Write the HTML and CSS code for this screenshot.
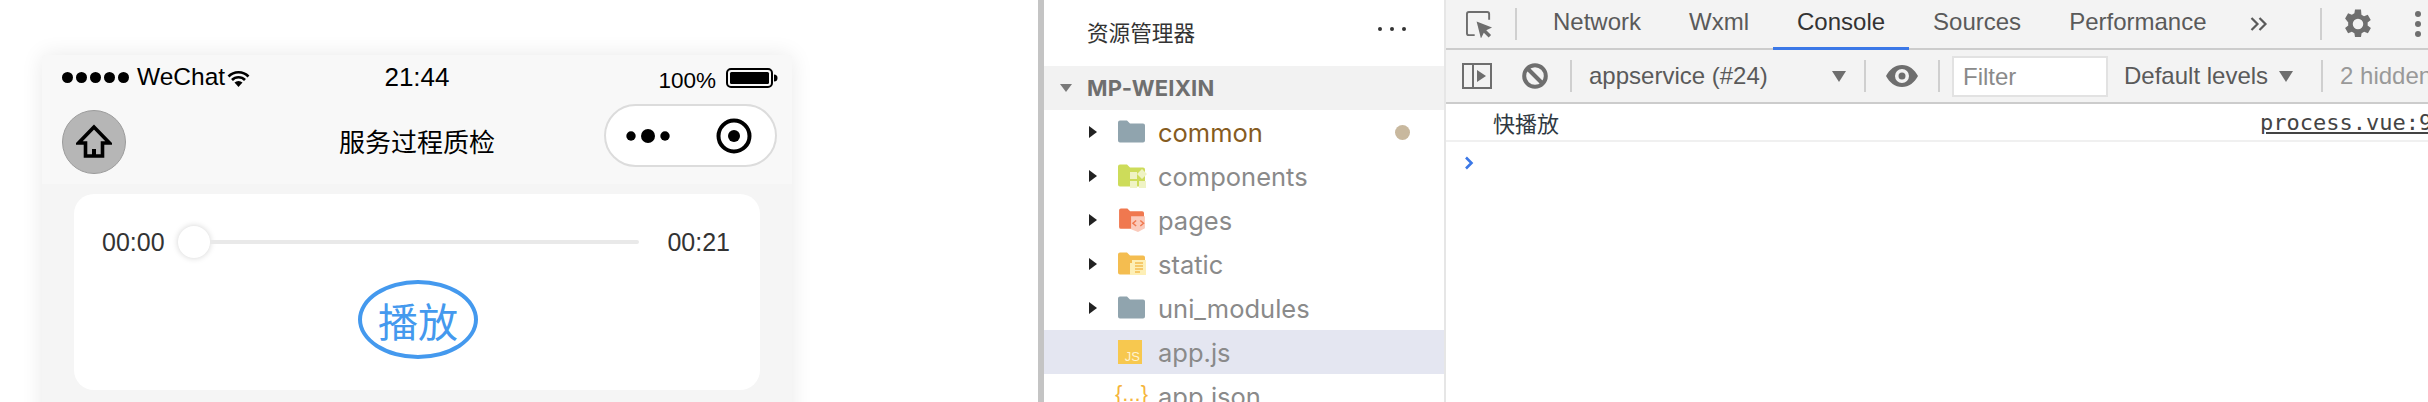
FILE: index.html
```html
<!DOCTYPE html>
<html lang="zh-CN">
<head>
  <meta charset="UTF-8">
  <title>服务过程质检</title>
  <link rel="stylesheet" href="styles.css">
</head>
<body>
  <section class="simulator">
    <div class="phone">
      <header class="phone-head">
        <div class="status">
          <div class="status-left">
            <span class="signal"><i></i><i></i><i></i><i></i><i></i></span>
            <span class="carrier">WeChat</span>
            <svg class="wifi" viewBox="0 0 23 17"><path d="M1.500 6.500a14 14 0 0 1 20 0" fill="none" stroke="#000" stroke-width="2.600"/><path d="M5 10a9 9 0 0 1 13 0" fill="none" stroke="#000" stroke-width="2.600"/><path d="M7.500 12.600a5.600 5.600 0 0 1 8 0L11.500 17z" fill="#000"/></svg>
          </div>
          <div class="clock">21:44</div>
          <div class="status-right">
            <span class="percent">100%</span>
            <svg class="battery" viewBox="0 0 52 20"><rect x="1" y="1" width="45" height="18" rx="4" fill="none" stroke="#000" stroke-width="2"/><rect x="4" y="4" width="39" height="12" rx="1.500" fill="#000"/><path d="M48 6.500a3.500 3.500 0 0 1 0 7z" fill="#000"/></svg>
          </div>
        </div>
        <nav class="nav">
          <div class="nav-left">
            <button class="home">
              <svg viewBox="0 0 36 36"><path d="M18 3 2.500 19H9.500V32h17V19h7z" fill="none" stroke="#000" stroke-width="3.600" stroke-linejoin="miter"/><rect x="16" y="25" width="4" height="7" fill="#000"/></svg>
            </button>
          </div>
          <div class="nav-title">服务过程质检</div>
          <div class="nav-right">
            <div class="capsule">
              <svg class="capsule-more" viewBox="0 0 46 16"><circle cx="5" cy="8" r="4.700"/><circle cx="22" cy="8" r="7"/><circle cx="39" cy="8" r="4.700"/></svg>
              <svg class="capsule-close" viewBox="0 0 36 36"><circle cx="18" cy="18" r="15.500" fill="none" stroke="#000" stroke-width="4"/><circle cx="18" cy="18" r="6"/></svg>
            </div>
          </div>
        </nav>
      </header>
      <main class="phone-body">
        <div class="card">
          <div class="player">
            <span class="time">00:00</span>
            <div class="slider">
              <span class="knob"></span>
              <span class="track"></span>
            </div>
            <span class="time">00:21</span>
          </div>
          <div class="play">播放</div>
        </div>
      </main>
    </div>
  </section>

  <div class="splitter"></div>

  <aside class="explorer">
    <div class="explorer-head">
      <span>资源管理器</span>
      <span class="more"><i></i><i></i><i></i></span>
    </div>
    <div class="project"><span class="caret-down"></span>MP-WEIXIN</div>
    <ul class="tree">
      <li class="row">
        <span class="arrow"></span>
        <svg class="file-icon" viewBox="0 0 30 24"><path d="M1 2.500a2 2 0 0 1 2-2h7l3 3h13a2 2 0 0 1 2 2v15a2 2 0 0 1-2 2H3a2 2 0 0 1-2-2z" fill="#90a4ae"/></svg>
        <span class="label modified">common</span>
        <span class="dot"></span>
      </li>
      <li class="row">
        <span class="arrow"></span>
        <svg class="file-icon" viewBox="0 0 30 24"><path d="M1 2.500a2 2 0 0 1 2-2h7l3 3h13a2 2 0 0 1 2 2v15a2 2 0 0 1-2 2H3a2 2 0 0 1-2-2z" fill="#cddc5a"/><path d="M13 8h7v7h-7zM13 17h7v7h-7zM22 17h7v7h-7zM25 5l5 5-5 5-5-5z" fill="#eff3c4"/></svg>
        <span class="label">components</span>
      </li>
      <li class="row">
        <span class="arrow"></span>
        <svg class="file-icon" viewBox="0 0 30 26"><path d="M1 2.500a2 2 0 0 1 2-2h7l3 3h13a2 2 0 0 1 2 2v15a2 2 0 0 1-2 2H3a2 2 0 0 1-2-2z" fill="#f0784f"/><path d="M14 9h15v13l-7.500 4-7.500-3z" fill="#fbcabb"/><path d="M19.500 13.500 16 16.500l3.500 3M24 13.500l3.500 3-3.500 3" fill="none" stroke="#f0784f" stroke-width="1.600"/></svg>
        <span class="label">pages</span>
      </li>
      <li class="row">
        <span class="arrow"></span>
        <svg class="file-icon" viewBox="0 0 30 24"><path d="M1 2.500a2 2 0 0 1 2-2h7l3 3h13a2 2 0 0 1 2 2v15a2 2 0 0 1-2 2H3a2 2 0 0 1-2-2z" fill="#f4bd50"/><path d="M15 8h14v15H13V11h2z" fill="#fdefb6"/><path d="M18 11h8M18 14h8M18 17h8M18 20h5" stroke="#f4bd50" stroke-width="1.500"/></svg>
        <span class="label">static</span>
      </li>
      <li class="row">
        <span class="arrow"></span>
        <svg class="file-icon" viewBox="0 0 30 24"><path d="M1 2.500a2 2 0 0 1 2-2h7l3 3h13a2 2 0 0 1 2 2v15a2 2 0 0 1-2 2H3a2 2 0 0 1-2-2z" fill="#90a4ae"/></svg>
        <span class="label">uni_modules</span>
      </li>
      <li class="row selected">
        <span class="arrow-none"></span>
        <span class="js-icon">JS</span>
        <span class="label">app.js</span>
      </li>
      <li class="row">
        <span class="arrow-none"></span>
        <span class="json-icon">{...}</span>
        <span class="label">app.json</span>
      </li>
    </ul>
  </aside>

  <section class="devtools">
    <div class="tabbar">
      <svg class="inspect" viewBox="0 0 28 28"><path d="M9 25H3a2 2 0 0 1-2-2V3a2 2 0 0 1 2-2h19a2 2 0 0 1 2 2v6" fill="none" stroke="#6e6e6e" stroke-width="2"/><path d="M11 11l16 6-6 3 5 5-2.500 2.500-5-5-3 6z" fill="#6e6e6e"/></svg>
      <span class="sep sep-tab"></span>
      <div class="tabs">
        <span class="tab">Network</span>
        <span class="tab">Wxml</span>
        <span class="tab active">Console</span>
        <span class="tab">Sources</span>
        <span class="tab">Performance</span>
      </div>
      <svg class="overflow-tabs" viewBox="0 0 18 14"><path d="M1.500 1 7.500 7l-6 6M9.500 1l6 6-6 6" fill="none" stroke="#5a5a5a" stroke-width="2.200"/></svg>
      <span class="sep sep-gear"></span>
      <svg class="gear" viewBox="0 0 24 24"><path fill="#6e6e6e" d="M19.400 13a7.600 7.600 0 0 0 0-2l2.100-1.600-2-3.500-2.500 1a7.600 7.600 0 0 0-1.700-1L15 2.300h-4l-.4 2.600a7.600 7.600 0 0 0-1.700 1l-2.500-1-2 3.500L6.500 11a7.600 7.600 0 0 0 0 2l-2.100 1.600 2 3.500 2.500-1a7.600 7.600 0 0 0 1.700 1l.4 2.600h4l.4-2.600a7.600 7.600 0 0 0 1.700-1l2.500 1 2-3.500zM13 15.500a3.500 3.500 0 1 1 0-7 3.500 3.500 0 0 1 0 7z" transform="translate(-1 0)"/></svg>
      <span class="kebab"><i></i><i></i><i></i></span>
    </div>
    <div class="filterbar">
      <svg class="drawer" viewBox="0 0 30 26"><path d="M1 1h28v24H1zM11 1v24" fill="none" stroke="#6e6e6e" stroke-width="2"/><path d="M15 7l9 6-9 6z" fill="#6e6e6e"/></svg>
      <svg class="block" viewBox="0 0 26 26"><circle cx="13" cy="13" r="10.800" fill="none" stroke="#6e6e6e" stroke-width="4"/><path d="M5.500 5.500l15 15" stroke="#6e6e6e" stroke-width="4"/></svg>
      <span class="sep sep-block"></span>
      <span class="context">appservice (#24)</span>
      <span class="caret"></span>
      <span class="sep sep-context"></span>
      <svg class="eye" viewBox="0 0 32 22"><path fill="#6e6e6e" fill-rule="evenodd" d="M16 0C9 0 3.500 4.500 0 11c3.500 6.500 9 11 16 11s12.500-4.500 16-11C28.500 4.500 23 0 16 0zm0 18a7 7 0 1 1 0-14 7 7 0 0 1 0 14zm0-3.500a3.500 3.500 0 1 0 0-7 3.500 3.500 0 0 0 0 7z"/></svg>
      <span class="sep sep-eye"></span>
      <div class="filter">Filter</div>
      <span class="levels">Default levels</span>
      <span class="caret caret-levels"></span>
      <span class="sep sep-levels"></span>
      <span class="hidden-count">2 hidden</span>
    </div>
    <div class="console">
      <div class="message">
        <span>快播放</span>
        <a class="source">process.vue:9</a>
      </div>
      <div class="prompt">
        <svg viewBox="0 0 10 14"><path d="M2 1.500 7.500 7 2 12.500" fill="none" stroke="#3b78e7" stroke-width="2.600"/></svg>
      </div>
    </div>
  </section>
</body>
</html>
```

FILE: styles.css
```css
* {
  box-sizing: border-box;
}
html, body {
  height: 402px;
}
body {
  margin: 0;
  display: flex;
  overflow: hidden;
  background: #fff;
  font-family: "Liberation Sans", "Noto Sans CJK SC", sans-serif;
  color: #000;
}
i {
  display: block;
}

/* simulator */
.simulator {
  width: 1038px;
  height: 402px;
  flex: none;
  padding: 55px 0 0 42px;
  overflow: hidden;
}
.phone {
  width: 750px;
  height: 420px;
  border-radius: 4px 4px 0 0;
  background: #f5f5f5;
  box-shadow: 0 0 22px rgba(0, 0, 0, 0.09);
}
.phone-head {
  height: 129px;
  background: #f8f8f8;
  border-radius: 4px 4px 0 0;
}
.status {
  height: 44px;
  padding: 0 20px;
  display: grid;
  grid-template-columns: 1fr auto 1fr;
  align-items: center;
}
.status-left {
  display: flex;
  align-items: center;
}
.signal {
  display: flex;
  gap: 3px;
  margin-right: 8px;
}
.signal i {
  width: 11px;
  height: 11px;
  border-radius: 50%;
  background: #000;
}
.carrier {
  font-size: 24.500px;
}
.wifi {
  width: 23px;
  height: 17px;
  margin-left: 2px;
  margin-top: 2px;
}
.clock {
  font-size: 26px;
}
.status-right {
  display: flex;
  justify-content: flex-end;
  align-items: center;
  gap: 10px;
  margin-right: -6px;
  padding-top: 7px;
}
.percent {
  font-size: 22.500px;
}
.battery {
  width: 52px;
  height: 20px;
  margin-top: -6px;
}
.nav {
  height: 85px;
  padding: 0 20px;
  display: grid;
  grid-template-columns: 1fr auto 1fr;
  align-items: center;
}
.home {
  width: 64px;
  height: 64px;
  padding: 0;
  display: flex;
  align-items: center;
  justify-content: center;
  border: 1px solid #9c9c9c;
  border-radius: 50%;
  background: #b6b6b6;
}
.home svg {
  width: 36px;
  height: 36px;
}
.nav-title {
  padding-bottom: 2px;
  font-size: 26px;
}
.nav-right {
  display: flex;
  justify-content: flex-end;
  margin-right: -5px;
}
.capsule {
  width: 173px;
  height: 63px;
  margin-bottom: 12px;
  padding: 0 23px 0 20px;
  display: flex;
  align-items: center;
  justify-content: space-between;
  border: 2px solid #dcdcdc;
  border-radius: 32px;
  background: #fff;
}
.capsule-more {
  width: 46px;
  height: 16px;
}
.capsule-close {
  width: 36px;
  height: 36px;
}
.phone-body {
  padding: 10px 32px 0;
}
.card {
  height: 196px;
  padding: 32px 30px 0 28px;
  border-radius: 20px;
  background: #fff;
}
.player {
  display: flex;
  align-items: center;
  height: 32px;
}
.time {
  font-size: 25px;
  color: #333;
}
.slider {
  flex: 1;
  margin: 0 28px 0 13px;
  display: flex;
  align-items: center;
}
.knob {
  width: 32px;
  height: 32px;
  flex: none;
  border-radius: 50%;
  background: #fff;
  box-shadow: 0 0 6px rgba(0, 0, 0, 0.18);
}
.track {
  flex: 1;
  height: 4px;
  border-radius: 0 2px 2px 0;
  background: #e9e9e9;
}
.play {
  width: 120px;
  height: 79px;
  margin: 22px 0 0 256px;
  display: flex;
  align-items: center;
  justify-content: center;
  border: 4px solid #4499ee;
  border-radius: 50%;
  font-size: 40px;
  color: #4499ee;
}

.splitter {
  width: 6px;
  height: 402px;
  flex: none;
  background: #c4c4c4;
}

/* file tree */
.explorer {
  width: 400px;
  flex: none;
  overflow: hidden;
  background: #fff;
}
.explorer-head {
  height: 66px;
  padding: 0 38px 4px 43px;
  display: flex;
  align-items: center;
  justify-content: space-between;
  font-size: 21.600px;
  color: #333;
}
.more {
  display: flex;
  gap: 8px;
  margin-bottom: 4px;
}
.more i {
  width: 4px;
  height: 4px;
  border-radius: 50%;
  background: #333;
}
.project {
  height: 44px;
  padding-left: 16px;
  display: flex;
  align-items: center;
  background: #f2f2f2;
  font-family: Inter, "Liberation Sans", sans-serif;
  font-size: 22px;
  font-weight: 700;
  letter-spacing: 0.2px;
  color: #6f6f6f;
}
.caret-down {
  width: 0;
  height: 0;
  margin-right: 15px;
  border-left: 6px solid transparent;
  border-right: 6px solid transparent;
  border-top: 8px solid #7a7a7a;
}
.tree {
  margin: 0;
  padding: 0;
  list-style: none;
}
.row {
  height: 44px;
  padding-left: 45px;
  padding-right: 34px;
  display: flex;
  align-items: center;
}
.row.selected {
  background: #e4e6f1;
}
.arrow {
  width: 0;
  height: 0;
  flex: none;
  margin-right: 20px;
  border-top: 6px solid transparent;
  border-bottom: 6px solid transparent;
  border-left: 8px solid #222;
}
.arrow-none {
  width: 28px;
  flex: none;
}
.file-icon {
  width: 30px;
  height: 24px;
  flex: none;
  margin-right: 11px;
}
.js-icon {
  width: 24px;
  height: 24px;
  flex: none;
  margin: 0 16px 0 1px;
  padding: 9px 2px 0 0;
  background: #f7c84f;
  font-size: 13px;
  line-height: 15px;
  text-align: right;
  color: #fff3cf;
}
.json-icon {
  width: 33px;
  flex: none;
  margin: 0 10px 4px -2px;
  font-size: 22px;
  text-align: center;
  color: #f5b53c;
  white-space: nowrap;
}
.label {
  font-family: Inter, "Liberation Sans", sans-serif;
  font-size: 25.500px;
  color: #8a8a8a;
}
.label.modified {
  color: #865c1f;
}
.dot {
  width: 15px;
  height: 15px;
  margin-left: auto;
  border-radius: 50%;
  background: #c8b89e;
}

/* devtools */
.devtools {
  flex: 1;
  min-width: 0;
  border-left: 2px solid #e6e6e6;
  overflow: hidden;
}
.tabbar, .filterbar {
  display: flex;
  align-items: center;
  white-space: nowrap;
  background: #f3f3f3;
  font-size: 24px;
  color: #5a5a5a;
}
.tabbar {
  height: 50px;
  border-bottom: 2px solid #cccccc;
}
.filterbar {
  height: 54px;
  border-bottom: 2px solid #cccccc;
}
.sep {
  width: 2px;
  height: 32px;
  flex: none;
  background: #cfcfcf;
}
.inspect {
  width: 27px;
  height: 27px;
  flex: none;
  margin-left: 20px;
}
.sep-tab {
  margin-left: 22px;
}
.tabs {
  display: flex;
  flex: none;
  align-self: flex-start;
  height: 50px;
  margin-left: 12px;
}
.tab {
  padding: 0 24px;
  line-height: 44px;
}
.tab.active {
  color: #333;
  border-bottom: 3px solid #3b78e7;
}
.overflow-tabs {
  width: 18px;
  height: 14px;
  flex: none;
  margin-left: 19px;
}
.sep-gear {
  margin-left: 52px;
}
.gear {
  width: 36px;
  height: 36px;
  flex: none;
  margin-left: 18px;
}
.kebab {
  flex: none;
  margin-left: 39px;
  display: flex;
  flex-direction: column;
  gap: 4px;
}
.kebab i {
  width: 6px;
  height: 6px;
  border-radius: 50%;
  background: #6e6e6e;
}
.drawer {
  width: 30px;
  height: 26px;
  flex: none;
  margin-left: 16px;
}
.block {
  width: 26px;
  height: 26px;
  flex: none;
  margin-left: 30px;
}
.sep-block {
  margin-left: 22px;
}
.context {
  width: 243px;
  flex: none;
  margin-left: 17px;
}
.caret {
  width: 0;
  height: 0;
  flex: none;
  border-left: 7px solid transparent;
  border-right: 7px solid transparent;
  border-top: 11px solid #6e6e6e;
}
.sep-context {
  margin-left: 18px;
}
.eye {
  width: 32px;
  height: 22px;
  flex: none;
  margin-left: 20px;
}
.sep-eye {
  margin-left: 20px;
}
.filter {
  width: 156px;
  height: 41px;
  flex: none;
  margin-left: 12px;
  padding-left: 9px;
  border: 2px solid #e2e2e2;
  background: #fff;
  line-height: 38px;
  color: #8a8a8a;
}
.levels {
  flex: none;
  margin-left: 16px;
}
.caret-levels {
  margin-left: 11px;
}
.sep-levels {
  margin-left: 28px;
}
.hidden-count {
  flex: none;
  margin-left: 17px;
  color: #999;
}
.console {
  background: #fff;
}
.message {
  height: 38px;
  padding-left: 47px;
  display: flex;
  align-items: center;
  justify-content: space-between;
  white-space: nowrap;
  border-bottom: 2px solid #f0f0f0;
  font-size: 22px;
  color: #303942;
}
.source {
  width: 168px;
  flex: none;
  overflow: hidden;
  font-family: "DejaVu Sans Mono", monospace;
  font-size: 22px;
  text-decoration: underline;
  color: #444;
}
.prompt {
  padding: 14px 0 0 18px;
}
.prompt svg {
  display: block;
  width: 10px;
  height: 14px;
}
```
